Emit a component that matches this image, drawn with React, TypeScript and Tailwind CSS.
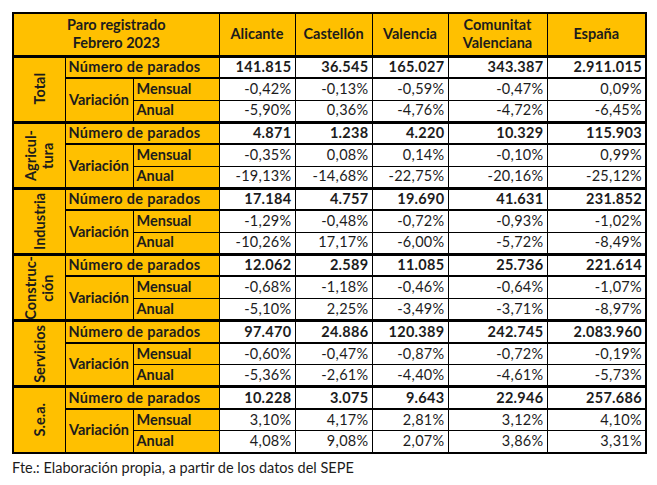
import React from "react";

type Sec = { label: string[]; num: string[]; men: string[]; anu: string[] };

const sections: Sec[] = [
  {
    label: ["Total"],
    num: ["141.815", "36.545", "165.027", "343.387", "2.911.015"],
    men: ["-0,42%", "-0,13%", "-0,59%", "-0,47%", "0,09%"],
    anu: ["-5,90%", "0,36%", "-4,76%", "-4,72%", "-6,45%"],
  },
  {
    label: ["Agricul-", "tura"],
    num: ["4.871", "1.238", "4.220", "10.329", "115.903"],
    men: ["-0,35%", "0,08%", "0,14%", "-0,10%", "0,99%"],
    anu: ["-19,13%", "-14,68%", "-22,75%", "-20,16%", "-25,12%"],
  },
  {
    label: ["Industria"],
    num: ["17.184", "4.757", "19.690", "41.631", "231.852"],
    men: ["-1,29%", "-0,48%", "-0,72%", "-0,93%", "-1,02%"],
    anu: ["-10,26%", "17,17%", "-6,00%", "-5,72%", "-8,49%"],
  },
  {
    label: ["Construc-", "ción"],
    num: ["12.062", "2.589", "11.085", "25.736", "221.614"],
    men: ["-0,68%", "-1,18%", "-0,46%", "-0,64%", "-1,07%"],
    anu: ["-5,10%", "2,25%", "-3,49%", "-3,71%", "-8,97%"],
  },
  {
    label: ["Servicios"],
    num: ["97.470", "24.886", "120.389", "242.745", "2.083.960"],
    men: ["-0,60%", "-0,47%", "-0,87%", "-0,72%", "-0,19%"],
    anu: ["-5,36%", "-2,61%", "-4,40%", "-4,61%", "-5,73%"],
  },
  {
    label: ["S.e.a."],
    num: ["10.228", "3.075", "9.643", "22.946", "257.686"],
    men: ["3,10%", "4,17%", "2,81%", "3,12%", "4,10%"],
    anu: ["4,08%", "9,08%", "2,07%", "3,86%", "3,31%"],
  },
];

const font = { fontFamily: "Lato, 'Open Sans', sans-serif" };

export default function App() {
  return (
    <div className="w-[657px] h-[485px] bg-white pl-[12px] pt-[12px] text-[#1c1c1c]" style={font}>
      <table className="table-fixed border-collapse border-2 border-black text-[14.5px] leading-none">
        <colgroup>
          <col className="w-[52px]" />
          <col className="w-[68px]" />
          <col className="w-[86px]" />
          <col className="w-[76px]" />
          <col className="w-[77px]" />
          <col className="w-[76px]" />
          <col className="w-[99px]" />
          <col className="w-[99px]" />
        </colgroup>
        <thead>
          <tr className="h-[43px] bg-[#FFC000] font-bold">
            <th colSpan={3} className="border border-black border-b-2 font-bold text-center leading-[18px]">
              Paro registrado
              <br />
              Febrero 2023
            </th>
            <th className="border border-black border-b-2 font-bold">Alicante</th>
            <th className="border border-black border-b-2 font-bold">Castellón</th>
            <th className="border border-black border-b-2 font-bold">Valencia</th>
            <th className="border border-black border-b-2 font-bold leading-[18px]">
              Comunitat
              <br />
              Valenciana
            </th>
            <th className="border border-black border-b-2 font-bold">España</th>
          </tr>
        </thead>
        <tbody>
          {sections.map((s, i) => (
            <React.Fragment key={i}>
              <tr className="h-[22px] border-t-[3px] border-black">
                <td rowSpan={3} className="bg-[#FFC000] border border-black border-t-[3px] p-0">
                  <div className="flex justify-center items-center h-full">
                    <div className="[writing-mode:vertical-rl] rotate-180 font-bold text-center leading-[17px]">
                      {s.label.map((l, k) => (
                        <div key={k}>{l}</div>
                      ))}
                    </div>
                  </div>
                </td>
                <td colSpan={2} className="bg-[#FFC000] border border-black border-t-[3px] border-b-2 font-bold text-left pl-[3px] tracking-[0.3px]">
                  Número de parados
                </td>
                {s.num.map((v, k) => (
                  <td key={k} className="border border-black border-t-[3px] border-b-2 font-bold text-right pr-[3px] tracking-[0.3px]">
                    {v}
                  </td>
                ))}
              </tr>
              <tr className="h-[22px]">
                <td rowSpan={2} className="bg-[#FFC000] border border-black font-bold text-center">
                  Variación
                </td>
                <td className="bg-[#FFC000] border border-black font-bold text-left pl-[3px]">Mensual</td>
                {s.men.map((v, k) => (
                  <td key={k} className="border border-black text-right pr-[3px] tracking-[0.3px]">
                    {v}
                  </td>
                ))}
              </tr>
              <tr className="h-[22px]">
                <td className="bg-[#FFC000] border border-black font-bold text-left pl-[3px]">Anual</td>
                {s.anu.map((v, k) => (
                  <td key={k} className="border border-black text-right pr-[3px] tracking-[0.3px]">
                    {v}
                  </td>
                ))}
              </tr>
            </React.Fragment>
          ))}
        </tbody>
      </table>
      <div className="mt-[5px] text-[14.5px] leading-[18px]">Fte.: Elaboración propia, a partir de los datos del SEPE</div>
    </div>
  );
}
